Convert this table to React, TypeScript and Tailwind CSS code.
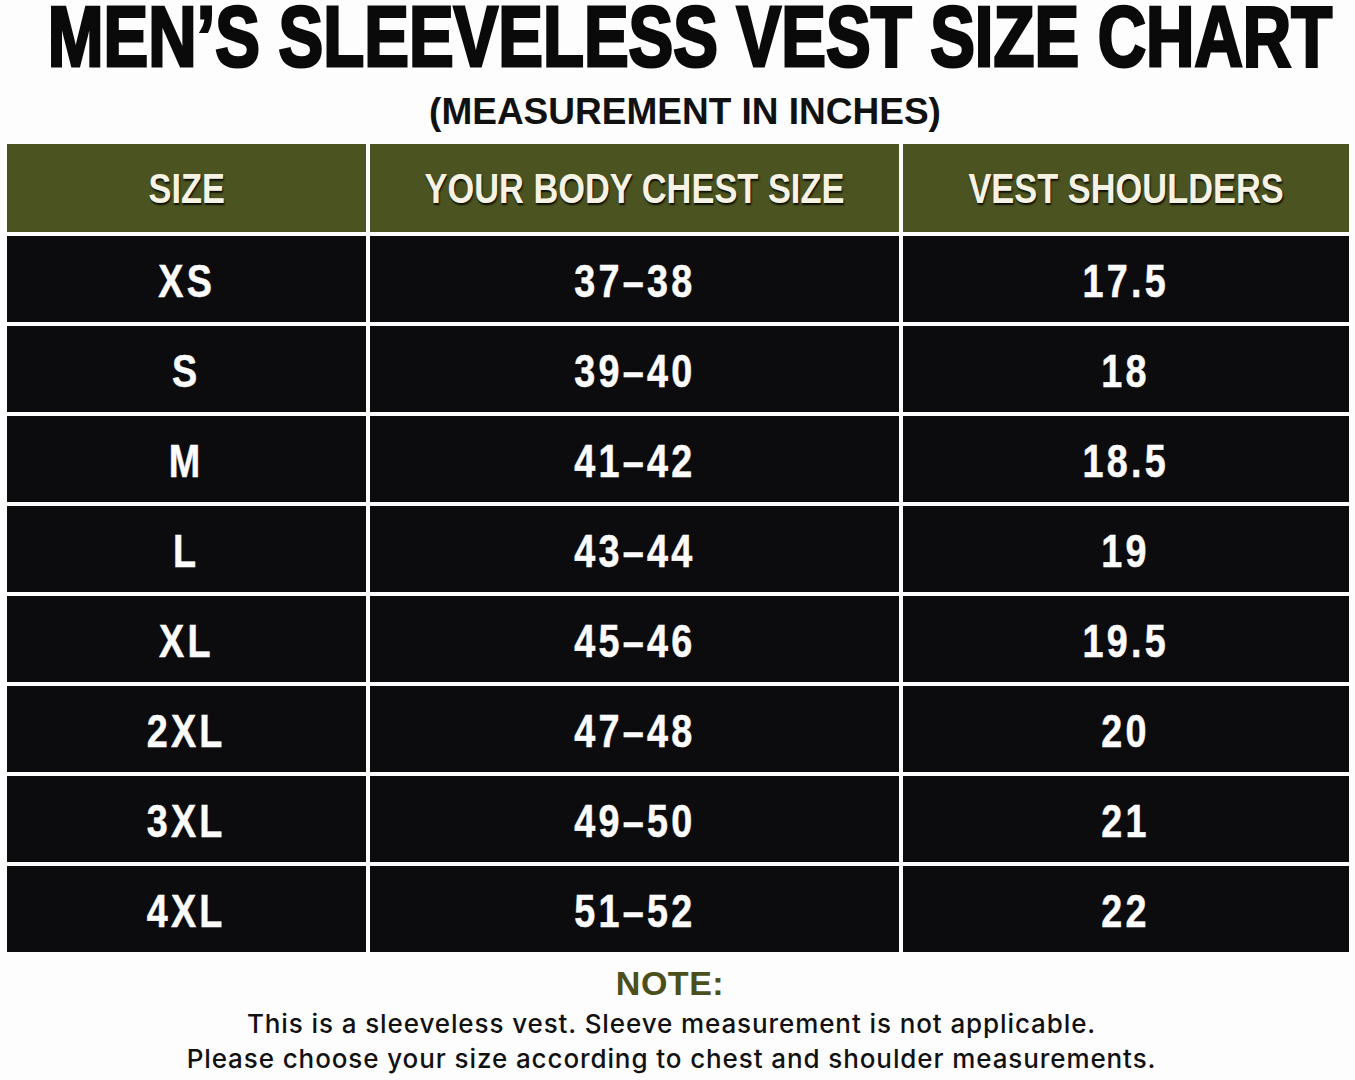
import { Fragment } from "react";

const rows = [
  { size: "XS", chest: "37–38", shoulders: "17.5" },
  { size: "S", chest: "39–40", shoulders: "18" },
  { size: "M", chest: "41–42", shoulders: "18.5" },
  { size: "L", chest: "43–44", shoulders: "19" },
  { size: "XL", chest: "45–46", shoulders: "19.5" },
  { size: "2XL", chest: "47–48", shoulders: "20" },
  { size: "3XL", chest: "49–50", shoulders: "21" },
  { size: "4XL", chest: "51–52", shoulders: "22" },
];

// no condensed face is installed, so Liberation Sans Bold gets squeezed horizontally
function HeaderCell({ label }: { label: string }) {
  return (
    <div className="flex h-[88px] items-center justify-center bg-[#4b5320]">
      <span className="inline-block scale-x-[0.8] whitespace-nowrap text-[43px] font-bold leading-none text-[#f6f3e4] [text-shadow:1px_2px_2px_rgba(0,0,0,0.85)]">
        {label}
      </span>
    </div>
  );
}

function BodyCell({ value }: { value: string }) {
  return (
    <div className="flex h-[86px] items-center justify-center bg-[#0c0c0e] pt-[3px]">
      <span className="inline-block scale-x-[0.82] whitespace-nowrap text-[46px] font-bold leading-none tracking-[4px] text-[#fbfbfb] [-webkit-text-stroke:0.5px_#fbfbfb]">
        {value}
      </span>
    </div>
  );
}

export default function App() {
  return (
    <div className="flex h-[1080px] w-[1355px] flex-col items-stretch overflow-hidden bg-[#fdfdfd] font-['Liberation_Sans',Arial,sans-serif]">
      {/* stretched vertically instead of squeezed, so the box stays inside the page */}
      <h1 className="flex h-[72px] items-start justify-center pl-[25px]">
        <span className="mt-[1px] inline-block origin-top scale-y-[1.27] whitespace-nowrap text-[67px] font-bold leading-[56px] text-[#0a0a0a] [-webkit-text-stroke:2.4px_#0a0a0a]">
          MEN’S SLEEVELESS VEST SIZE CHART
        </span>
      </h1>
      <p className="mt-[20px] pl-[15px] text-center text-[37px] font-bold leading-[40px] text-[#111]">
        (MEASUREMENT IN INCHES)
      </p>

      <div className="ml-[7px] mt-[12px] grid grid-cols-[359px_529px_446px] gap-[4px]">
        <HeaderCell label="SIZE" />
        <HeaderCell label="YOUR BODY CHEST SIZE" />
        <HeaderCell label="VEST SHOULDERS" />
        {rows.map((row) => (
          <Fragment key={row.size}>
            <BodyCell value={row.size} />
            <BodyCell value={row.chest} />
            <BodyCell value={row.shoulders} />
          </Fragment>
        ))}
      </div>

      <div className="mt-[13px] pr-[15px] text-center text-[34px] font-bold leading-[36px] tracking-[0.5px] text-[#4a4f1c]">
        NOTE:
      </div>
      <div className="mt-[5px] pr-[12px] text-center font-['Inter',sans-serif] text-[26px] font-medium leading-[35px] tracking-[0.9px] text-[#111]">
        <p>This is a sleeveless vest. Sleeve measurement is not applicable.</p>
        <p>Please choose your size according to chest and shoulder measurements.</p>
      </div>
    </div>
  );
}
